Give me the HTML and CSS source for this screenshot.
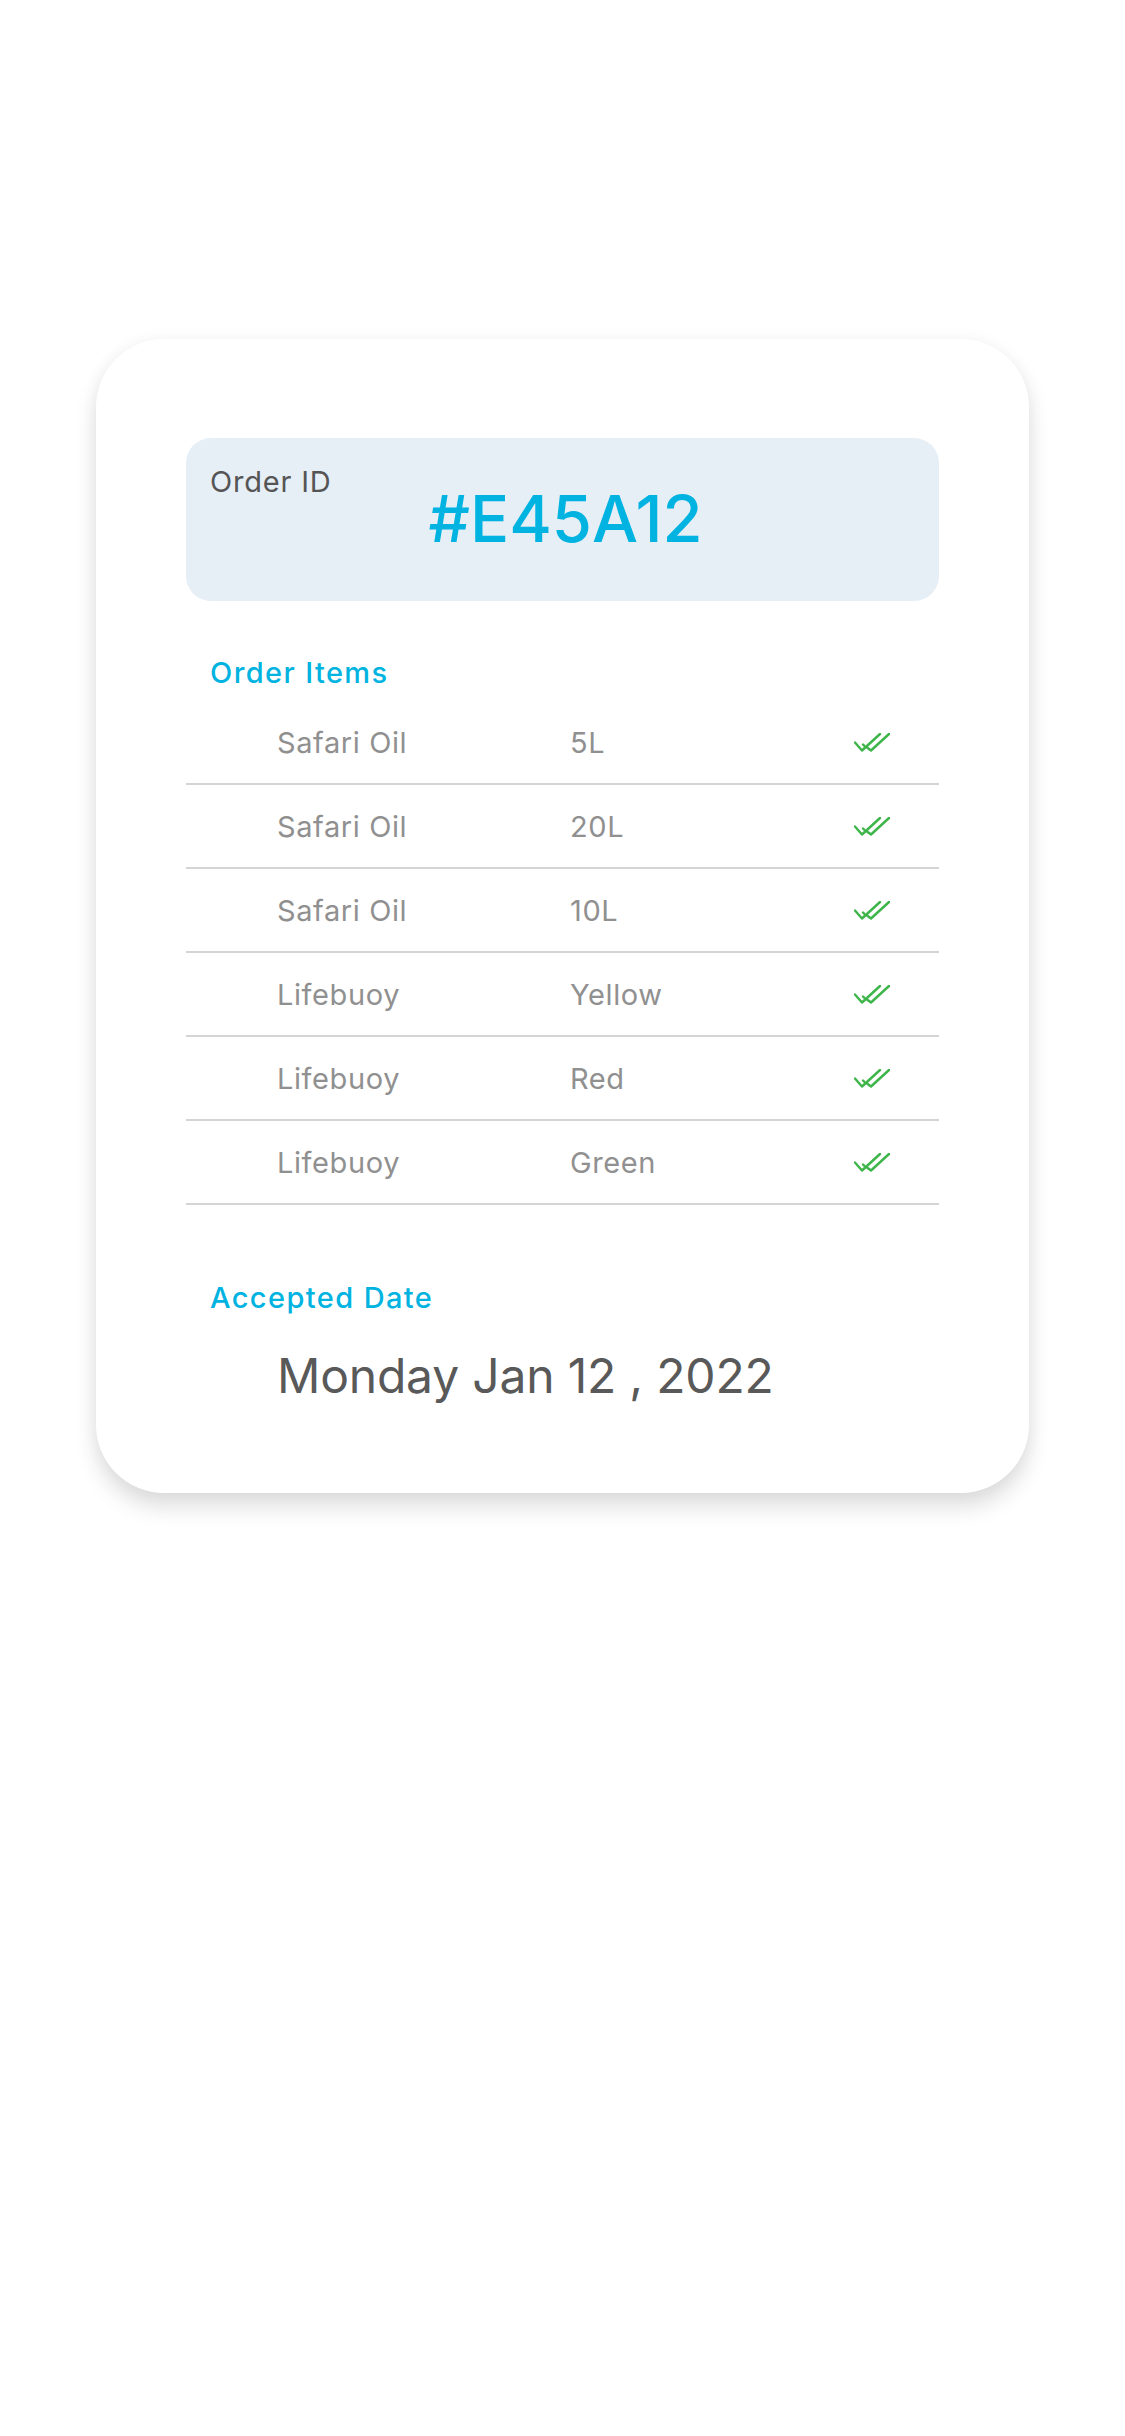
FILE: index.html
```html
<!DOCTYPE html>
<html lang="en">
<head>
<meta charset="utf-8">
<title>Order</title>
<link rel="stylesheet" href="styles.css">
</head>
<body>
<div class="card">
  <div class="id-box">
    <div class="id-label">Order ID</div>
    <div class="id-value">#E45A12</div>
  </div>
  <div class="section-title items-title">Order Items</div>
  <div class="items">
    <div class="row"><span class="name">Safari Oil</span><span class="size">5L</span><svg class="check" viewBox="0 0 36 20"><path d="M1 9.5l7 8M8 17.5L26 1M13 14.5l4 3M17 17.5L35 1"/><path d="M9 11.5l1.5 1.5"/></svg></div>
    <div class="row"><span class="name">Safari Oil</span><span class="size">20L</span><svg class="check" viewBox="0 0 36 20"><path d="M1 9.5l7 8M8 17.5L26 1M13 14.5l4 3M17 17.5L35 1"/><path d="M9 11.5l1.5 1.5"/></svg></div>
    <div class="row"><span class="name">Safari Oil</span><span class="size">10L</span><svg class="check" viewBox="0 0 36 20"><path d="M1 9.5l7 8M8 17.5L26 1M13 14.5l4 3M17 17.5L35 1"/><path d="M9 11.5l1.5 1.5"/></svg></div>
    <div class="row"><span class="name">Lifebuoy</span><span class="size">Yellow</span><svg class="check" viewBox="0 0 36 20"><path d="M1 9.5l7 8M8 17.5L26 1M13 14.5l4 3M17 17.5L35 1"/><path d="M9 11.5l1.5 1.5"/></svg></div>
    <div class="row"><span class="name">Lifebuoy</span><span class="size">Red</span><svg class="check" viewBox="0 0 36 20"><path d="M1 9.5l7 8M8 17.5L26 1M13 14.5l4 3M17 17.5L35 1"/><path d="M9 11.5l1.5 1.5"/></svg></div>
    <div class="row"><span class="name">Lifebuoy</span><span class="size">Green</span><svg class="check" viewBox="0 0 36 20"><path d="M1 9.5l7 8M8 17.5L26 1M13 14.5l4 3M17 17.5L35 1"/><path d="M9 11.5l1.5 1.5"/></svg></div>
  </div>
  <div class="section-title date-title">Accepted Date</div>
  <div class="date">Monday Jan 12 , 2022</div>
</div>
</body>
</html>
```
FILE: styles.css
```css
* { box-sizing: border-box; }
html, body { margin: 0; padding: 0; background: #ffffff; }
body {
  font-family: Inter, "Open Sans", sans-serif;
  width: 1125px;
  min-height: 2436px;
  padding-top: 339px;
}
.card {
  margin-left: 96px;
  width: 933px;
  background: #ffffff;
  border-radius: 68px;
  padding: 99px 90px 87px 90px;
  box-shadow: 0 14px 22px rgba(0, 0, 0, 0.13), 0 0 18px rgba(0, 0, 0, 0.04);
}
.id-box {
  background: #e6eef6;
  border-radius: 25px;
  height: 163px;
  padding: 29px 24px 0 24px;
}
.id-label {
  font-size: 29px;
  line-height: 30px;
  letter-spacing: 0.8px;
  color: #555555;
}
.id-value {
  font-size: 65px;
  line-height: 44px;
  font-weight: 500;
  color: #00b3e0;
  text-align: center;
  padding-left: 6px;
}
.section-title {
  font-size: 29px;
  line-height: 36px;
  font-weight: 500;
  letter-spacing: 1.4px;
  color: #00b3e0;
  padding-left: 24px;
}
.items-title { margin-top: 54px; }
.items { margin-top: 10px; }
.row {
  height: 84px;
  border-bottom: 2px solid #d4d4d4;
  display: grid;
  grid-template-columns: 293px 284px 36px;
  align-items: center;
  padding-left: 91px;
  padding-top: 1px;
  font-size: 29px;
  letter-spacing: 0.6px;
  color: #909090;
}
.check {
  width: 36px;
  height: 20px;
  fill: none;
  stroke: #3db549;
  stroke-width: 2.4;
  stroke-linecap: round;
}
.date-title { margin-top: 75px; }
.date {
  margin-top: 30px;
  padding-left: 91px;
  font-size: 48px;
  line-height: 60px;
  letter-spacing: -0.2px;
  color: #595959;
}
```
